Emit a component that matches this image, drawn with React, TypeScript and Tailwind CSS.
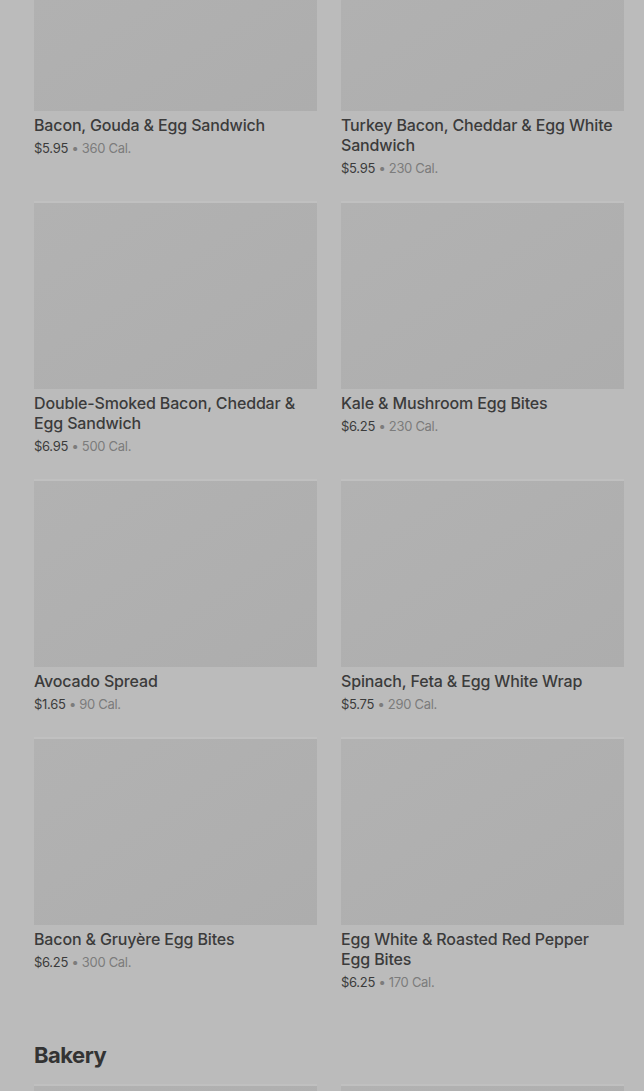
import React from "react";

type Item = { name: string; price: string; cal: string };

const items: Item[] = [
  { name: "Bacon, Gouda & Egg Sandwich", price: "$5.95", cal: "360 Cal." },
  { name: "Turkey Bacon, Cheddar & Egg White Sandwich", price: "$5.95", cal: "230 Cal." },
  { name: "Double-Smoked Bacon, Cheddar & Egg Sandwich", price: "$6.95", cal: "500 Cal." },
  { name: "Kale & Mushroom Egg Bites", price: "$6.25", cal: "230 Cal." },
  { name: "Avocado Spread", price: "$1.65", cal: "90 Cal." },
  { name: "Spinach, Feta & Egg White Wrap", price: "$5.75", cal: "290 Cal." },
  { name: "Bacon & Gruyère Egg Bites", price: "$6.25", cal: "300 Cal." },
  { name: "Egg White & Roasted Red Pepper Egg Bites", price: "$6.25", cal: "170 Cal." },
];

function Card({ item }: { item: Item }) {
  return (
    <div className="flex flex-col">
      <div className="h-[186px] w-full bg-gradient-to-br from-[#b2b2b2] to-[#adadad] shadow-[0_-2px_0_#c0c0c0]" />
      <div className="mt-[4px] pr-[8px] text-[16px] leading-[20px] font-medium tracking-[-0.15px] text-[#3b3b3b]">
        {item.name}
      </div>
      <div className="mt-[4px] text-[13px] leading-[18px] tracking-[-0.3px] text-[#3b3b3b]">
        {item.price} <span className="text-[#7c7c7c]">• {item.cal}</span>
      </div>
    </div>
  );
}

export default function App() {
  return (
    <div
      className="h-[1091px] overflow-hidden bg-[#bbbbbb] pl-[34px] pr-[20px]"
      style={{ fontFamily: "Inter, 'Noto Sans', sans-serif" }}
    >
      <div className="mt-[-75px] grid grid-cols-2 gap-x-[24px] gap-y-[26px]">
        {items.map((it) => (
          <Card key={it.name} item={it} />
        ))}
      </div>
      <h2 className="mt-[50px] text-[22px] leading-[28px] font-bold text-[#333333] tracking-[-0.5px]">
        Bakery
      </h2>
      <div className="mt-[17px] grid grid-cols-2 gap-x-[24px]">
        <div className="h-[186px] bg-gradient-to-br from-[#b2b2b2] to-[#adadad] shadow-[0_-2px_0_#c0c0c0]" />
        <div className="h-[186px] bg-gradient-to-br from-[#b2b2b2] to-[#adadad] shadow-[0_-2px_0_#c0c0c0]" />
      </div>
    </div>
  );
}
